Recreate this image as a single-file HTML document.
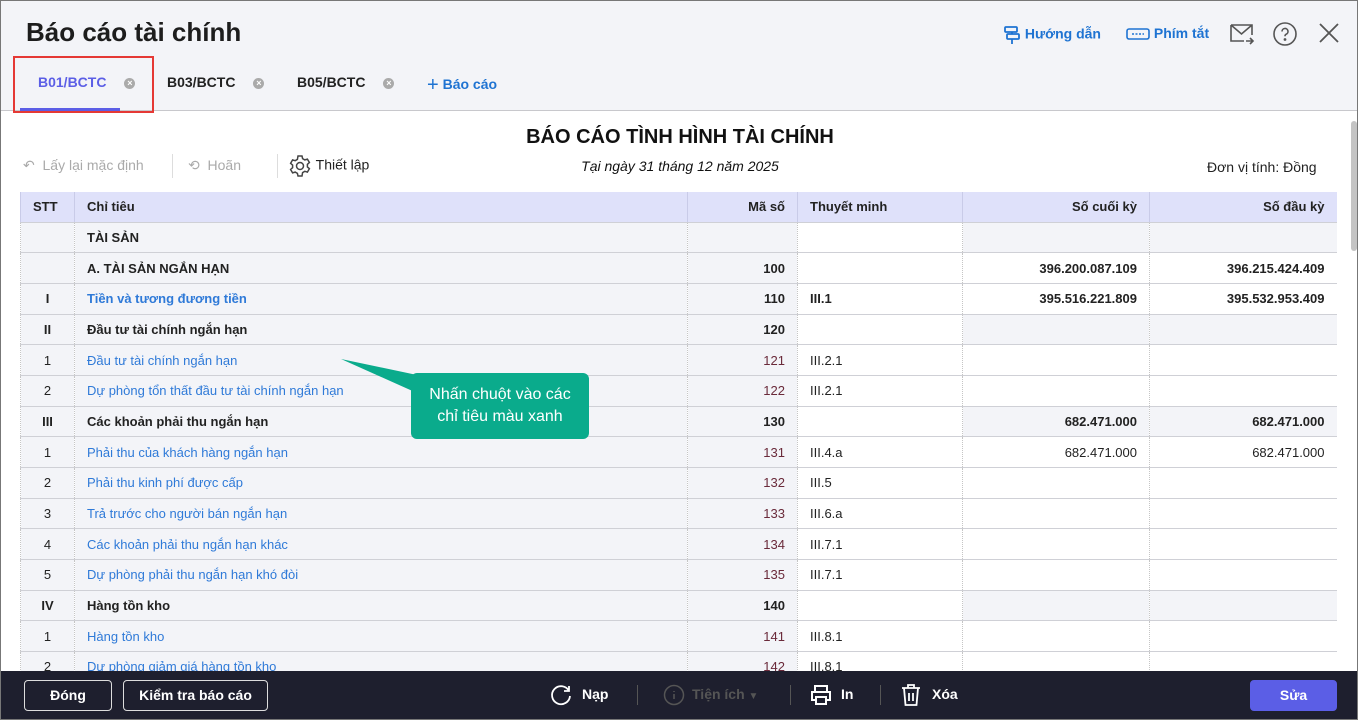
<!DOCTYPE html>
<html><head><meta charset="utf-8"><style>
*{box-sizing:border-box;margin:0;padding:0}
body{width:1358px;height:720px;overflow:hidden;font-family:"Liberation Sans",sans-serif;background:#fff;position:relative;color:#222}
.win{position:absolute;inset:0;border:1px solid #777;overflow:hidden}
.hdr{position:absolute;left:0;top:0;width:1358px;height:110px;background:#f3f4f8;border-bottom:1px solid #c8c8cc}
.abs{position:absolute;white-space:nowrap}
h1{position:absolute;left:25px;top:16px;font-size:26px;font-weight:bold;color:#1d1d1d}
.tab{position:absolute;top:73px;font-size:14px;font-weight:bold;color:#222}
.x{display:inline-block;width:11px;height:11px;border-radius:50%;background:#aaa;color:#fff;font-size:9px;line-height:11px;text-align:center;vertical-align:middle}
table{position:absolute;left:19px;top:191px;border-collapse:collapse;table-layout:fixed;width:1316px;font-size:13px}
td,th{height:30.7px;border-bottom:1px solid #cfd0d6;border-left:1px dotted #c5c5c5;padding:0 12px;white-space:nowrap;overflow:hidden}
th{background:#dfe1fa;font-weight:bold;text-align:left;height:30px;border-left:1px solid #c9cbe8}
td{background:#f3f4f8}
td.w{background:#fff}
.b td{font-weight:bold}
.r{text-align:right}
.c{text-align:center}
.l{color:#2f7ad8}
.m{color:#6a2a3a}
.ft{position:absolute;left:0;top:670px;width:1358px;height:50px;background:#1e1f2e}
.btn{position:absolute;top:679px;height:31px;border:1px solid #ddd;border-radius:4px;color:#fff;font-weight:bold;font-size:14px;line-height:29px;text-align:center}
.fi{position:absolute;top:685px;color:#fff;font-weight:bold;font-size:14px}
</style></head><body><div class="win">
<div class="hdr"></div>
<h1>Báo cáo tài chính</h1>
<div class="abs" style="left:1002px;top:24px;color:#1e73d2;font-size:14px;font-weight:bold">
<svg width="18" height="20" viewBox="0 0 18 20" style="vertical-align:middle" fill="none" stroke="#1e73d2" stroke-width="1.8"><rect x="2" y="2" width="12" height="5" rx="1"/><rect x="4" y="9" width="12" height="5" rx="1"/><path d="M9 14v5M9 7v2"/></svg> Hướng dẫn</div>
<div class="abs" style="left:1125px;top:24px;color:#1e73d2;font-size:14px;font-weight:bold">
<svg width="24" height="14" viewBox="0 0 24 14" style="vertical-align:middle" fill="none" stroke="#1e73d2" stroke-width="1.6"><rect x="1" y="2" width="22" height="10" rx="2"/><path d="M6 7h12" stroke-dasharray="2 1.5"/></svg> Phím tắt</div>
<svg class="abs" style="left:1228px;top:20px" width="26" height="26" viewBox="0 0 26 26" fill="none" stroke="#555" stroke-width="1.6"><path d="M2 4h21v10M2 4v16h13M2 4l10.5 9L23 4M17 20h7M21 17l3 3-3 3"/></svg>
<svg class="abs" style="left:1272px;top:21px" width="24" height="24" viewBox="0 0 24 24" fill="none" stroke="#555" stroke-width="1.6"><circle cx="12" cy="12" r="11"/><path d="M9 9.5a3 3 0 1 1 4 2.8c-.8.4-1 1-1 2"/><circle cx="12" cy="17.5" r=".6" fill="#555"/></svg>
<svg class="abs" style="left:1318px;top:22px" width="20" height="20" viewBox="0 0 20 20" stroke="#555" stroke-width="1.8"><path d="M1 1l18 18M19 1L1 19"/></svg>
<div class="tab" style="left:37px;color:#5b5ee6">B01/BCTC <span class="x" style="margin-left:14px">×</span></div>
<div class="abs" style="left:19px;top:107px;width:100px;height:3px;background:#5b5ee6"></div>
<div class="abs" style="left:12px;top:55px;width:141px;height:57px;border:2px solid #e53935"></div>
<div class="tab" style="left:166px">B03/BCTC <span class="x" style="margin-left:14px">×</span></div>
<div class="tab" style="left:296px">B05/BCTC <span class="x" style="margin-left:14px">×</span></div>
<div class="tab" style="left:426px;color:#1e73d2"><span style="font-size:20px;font-weight:normal;vertical-align:-2px">+</span> Báo cáo</div>
<div class="abs" style="left:0;width:1358px;top:125px;text-align:center;font-size:20px;font-weight:bold;color:#111">BÁO CÁO TÌNH HÌNH TÀI CHÍNH</div>
<div class="abs" style="left:0;width:1358px;top:157px;text-align:center;font-size:14px;font-style:italic;color:#111">Tại ngày 31 tháng 12 năm 2025</div>
<div class="abs" style="left:1206px;top:158px;font-size:14px;color:#222">Đơn vị tính: Đồng</div>
<div class="abs" style="left:22px;top:156px;font-size:14px;color:#aaa">&#8630;&nbsp; Lấy lại mặc định</div>
<div class="abs" style="left:171px;top:153px;width:1px;height:24px;background:#ddd"></div>
<div class="abs" style="left:187px;top:156px;font-size:14px;color:#aaa">&#10226;&nbsp; Hoãn</div>
<div class="abs" style="left:276px;top:153px;width:1px;height:24px;background:#ddd"></div>
<div class="abs" style="left:287px;top:153px;font-size:14px;color:#222"><svg width="24" height="24" viewBox="0 0 24 24" fill="none" stroke="#444" stroke-width="1.5" style="vertical-align:middle"><circle cx="12" cy="12" r="3.5"/><path d="M10 2h4l.6 2.6 2.2 1.3 2.6-.8 2 3.4-2 1.8v2.6l2 1.8-2 3.4-2.6-.8-2.2 1.3L14 22h-4l-.6-2.6-2.2-1.3-2.6.8-2-3.4 2-1.8v-2.6l-2-1.8 2-3.4 2.6.8 2.2-1.3z"/></svg> Thiết lập</div>
<table>
<colgroup><col style="width:54px"><col style="width:613px"><col style="width:110px"><col style="width:165px"><col style="width:187px"><col style="width:187px"></colgroup>
<tr><th>STT</th><th>Chỉ tiêu</th><th class="r">Mã số</th><th>Thuyết minh</th><th class="r">Số cuối kỳ</th><th class="r">Số đầu kỳ</th></tr>
<tr class="b"><td></td><td>TÀI SẢN</td><td></td><td class="w"></td><td></td><td></td></tr>
<tr class="b"><td></td><td>A. TÀI SẢN NGẮN HẠN</td><td class="r">100</td><td class="w"></td><td class="r w">396.200.087.109</td><td class="r w">396.215.424.409</td></tr>
<tr class="b"><td class="c">I</td><td class="l">Tiền và tương đương tiền</td><td class="r">110</td><td class="w">III.1</td><td class="r w">395.516.221.809</td><td class="r w">395.532.953.409</td></tr>
<tr class="b"><td class="c">II</td><td>Đầu tư tài chính ngắn hạn</td><td class="r">120</td><td class="w"></td><td></td><td></td></tr>
<tr><td class="c">1</td><td class="l">Đầu tư tài chính ngắn hạn</td><td class="r m">121</td><td class="w">III.2.1</td><td class="w"></td><td class="w"></td></tr>
<tr><td class="c">2</td><td class="l">Dự phòng tổn thất đầu tư tài chính ngắn hạn</td><td class="r m">122</td><td class="w">III.2.1</td><td class="w"></td><td class="w"></td></tr>
<tr class="b"><td class="c">III</td><td>Các khoản phải thu ngắn hạn</td><td class="r">130</td><td class="w"></td><td class="r">682.471.000</td><td class="r">682.471.000</td></tr>
<tr><td class="c">1</td><td class="l">Phải thu của khách hàng ngắn hạn</td><td class="r m">131</td><td class="w">III.4.a</td><td class="r w">682.471.000</td><td class="r w">682.471.000</td></tr>
<tr><td class="c">2</td><td class="l">Phải thu kinh phí được cấp</td><td class="r m">132</td><td class="w">III.5</td><td class="w"></td><td class="w"></td></tr>
<tr><td class="c">3</td><td class="l">Trả trước cho người bán ngắn hạn</td><td class="r m">133</td><td class="w">III.6.a</td><td class="w"></td><td class="w"></td></tr>
<tr><td class="c">4</td><td class="l">Các khoản phải thu ngắn hạn khác</td><td class="r m">134</td><td class="w">III.7.1</td><td class="w"></td><td class="w"></td></tr>
<tr><td class="c">5</td><td class="l">Dự phòng phải thu ngắn hạn khó đòi</td><td class="r m">135</td><td class="w">III.7.1</td><td class="w"></td><td class="w"></td></tr>
<tr class="b"><td class="c">IV</td><td>Hàng tồn kho</td><td class="r">140</td><td class="w"></td><td></td><td></td></tr>
<tr><td class="c">1</td><td class="l">Hàng tồn kho</td><td class="r m">141</td><td class="w">III.8.1</td><td class="w"></td><td class="w"></td></tr>
<tr><td class="c">2</td><td class="l">Dự phòng giảm giá hàng tồn kho</td><td class="r m">142</td><td class="w">III.8.1</td><td class="w"></td><td class="w"></td></tr>
</table>
<div class="abs" style="left:1350px;top:120px;width:6px;height:130px;background:#c4c4c4;border-radius:3px"></div>
<svg class="abs" style="left:338px;top:354px" width="80" height="40"><path d="M2 4L78 20V38Z" fill="#0aab8c"/></svg>
<div class="abs" style="left:410px;top:372px;width:178px;height:66px;background:#0aab8c;border-radius:6px;color:#fff;font-size:16px;text-align:center;line-height:22px;padding-top:11px">Nhấn chuột vào các<br>chỉ tiêu màu xanh</div>
<div class="ft"></div>
<div class="btn" style="left:23px;width:88px">Đóng</div>
<div class="btn" style="left:122px;width:145px">Kiểm tra báo cáo</div>
<svg class="abs" style="left:548px;top:682px" width="24" height="24" viewBox="0 0 24 24" fill="none" stroke="#fff" stroke-width="1.8"><path d="M20 8A9 9 0 1 0 21 13M20 3v5h-5"/></svg>
<div class="fi" style="left:581px">Nạp</div>
<div class="abs" style="left:636px;top:684px;width:1px;height:20px;background:#555"></div>
<svg class="abs" style="left:662px;top:683px" width="22" height="22" viewBox="0 0 22 22" fill="none" stroke="#555" stroke-width="1.5"><circle cx="11" cy="11" r="9.5"/><path d="M11 7v1M11 10v5"/></svg>
<div class="fi" style="left:691px;color:#555">Tiện ích <span style="font-size:10px">▼</span></div>
<div class="abs" style="left:789px;top:684px;width:1px;height:20px;background:#555"></div>
<svg class="abs" style="left:808px;top:682px" width="24" height="24" viewBox="0 0 24 24" fill="none" stroke="#fff" stroke-width="2"><path d="M6 8V3h12v5M6 17H3V9h18v8h-3M7 14h10v7H7z"/></svg>
<div class="fi" style="left:840px">In</div>
<div class="abs" style="left:879px;top:684px;width:1px;height:20px;background:#555"></div>
<svg class="abs" style="left:898px;top:682px" width="24" height="24" viewBox="0 0 24 24" fill="none" stroke="#fff" stroke-width="1.8"><path d="M3 5h18M9 5V2h6v3M5 5l1.5 17h11L19 5M10 10v8M14 10v8"/></svg>
<div class="fi" style="left:931px">Xóa</div>
<div class="btn" style="left:1249px;width:87px;background:#5b5ee6;border-color:#5b5ee6">Sửa</div>
</div></body></html>
